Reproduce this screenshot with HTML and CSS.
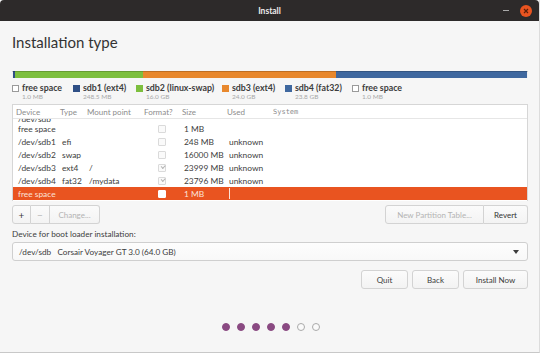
FILE: index.html
```html
<!DOCTYPE html>
<html lang="en">
<head>
    <meta charset="UTF-8">
    <title>Install</title>
    <link rel="stylesheet" href="styles.css">
</head>
<body>
<div class="window">
    <header class="titlebar">
        <span></span>
        <span class="title">Install</span>
        <div class="controls">
            <span class="minimize"></span>
            <span class="close">
                <svg width="12" height="12" viewBox="0 0 12 12"><circle cx="6" cy="6" r="6" fill="#e95420"/><path d="M4 4 L8 8 M8 4 L4 8" stroke="#5a1f0a" stroke-width="1.2"/></svg>
            </span>
        </div>
    </header>

    <main class="content">
        <h1>Installation type</h1>

        <div class="partbar">
            <span class="seg seg-free"></span>
            <span class="seg seg-sdb1"></span>
            <span class="seg seg-sdb2"></span>
            <span class="seg seg-sdb3"></span>
            <span class="seg seg-sdb4"></span>
            <span class="seg seg-free"></span>
        </div>

        <ul class="legend">
            <li><span class="swatch swatch-free"></span><div><b>free space</b><small>1.0 MB</small></div></li>
            <li><span class="swatch swatch-sdb1"></span><div><b>sdb1 (ext4)</b><small>248.5 MB</small></div></li>
            <li><span class="swatch swatch-sdb2"></span><div><b>sdb2 (linux-swap)</b><small>16.0 GB</small></div></li>
            <li><span class="swatch swatch-sdb3"></span><div><b>sdb3 (ext4)</b><small>24.0 GB</small></div></li>
            <li><span class="swatch swatch-sdb4"></span><div><b>sdb4 (fat32)</b><small>23.8 GB</small></div></li>
            <li><span class="swatch swatch-free"></span><div><b>free space</b><small>1.0 MB</small></div></li>
        </ul>

        <div class="parts">
            <div class="row head">
                <span>Device</span><span>Type</span><span>Mount point</span><span>Format?</span><span>Size</span><span>Used</span><span class="sys">System</span>
            </div>
            <div class="rows">
                <div class="row clipped"><span>/dev/sdb</span></div>
                <div class="row"><span>free space</span><span></span><span></span><span><i class="check"></i></span><span>1 MB</span><span></span><span></span></div>
                <div class="row"><span>/dev/sdb1</span><span>efi</span><span></span><span><i class="check"></i></span><span>248 MB</span><span>unknown</span><span></span></div>
                <div class="row"><span>/dev/sdb2</span><span>swap</span><span></span><span><i class="check"></i></span><span>16000 MB</span><span>unknown</span><span></span></div>
                <div class="row"><span>/dev/sdb3</span><span>ext4</span><span>/</span><span><i class="check on"></i></span><span>23999 MB</span><span>unknown</span><span></span></div>
                <div class="row"><span>/dev/sdb4</span><span>fat32</span><span>/mydata</span><span><i class="check on"></i></span><span>23796 MB</span><span>unknown</span><span></span></div>
                <div class="row selected"><span>free space</span><span></span><span></span><span><i class="check"></i></span><span>1 MB</span><span class="cursor"></span><span></span></div>
            </div>
        </div>

        <div class="toolbar">
            <div class="btn-group">
                <button class="btn small">+</button>
                <button class="btn small" disabled>−</button>
                <button class="btn change" disabled>Change...</button>
            </div>
            <div class="btn-group">
                <button class="btn newtable" disabled>New Partition Table...</button>
                <button class="btn revert">Revert</button>
            </div>
        </div>

        <label class="boot-label">Device for boot loader installation:</label>
        <div class="combo">
            <span>/dev/sdb&nbsp;&nbsp;&nbsp;Corsair Voyager GT 3.0 (64.0 GB)</span>
            <span class="arrow"></span>
        </div>

        <div class="actions">
            <button class="btn action">Quit</button>
            <button class="btn action">Back</button>
            <button class="btn action install">Install Now</button>
        </div>

        <div class="dots">
            <span class="dot done"></span>
            <span class="dot done"></span>
            <span class="dot done"></span>
            <span class="dot done"></span>
            <span class="dot done"></span>
            <span class="dot"></span>
            <span class="dot"></span>
        </div>
    </main>
</div>
</body>
</html>
```

FILE: styles.css
```css
*, *::before, *::after {
    box-sizing: border-box;
    margin: 0;
    padding: 0;
}

html, body {
    width: 540px;
    height: 354px;
    overflow: hidden;
    font-family: Lato, "Noto Sans", sans-serif;
    color: #3c3c3c;
    background: #ffffff;
}

.window {
    height: 353px;
    background: #f6f6f6;
    border-bottom: 1px solid #c8c8c8;
    border-right: 1px solid #dcdcdc;
    display: flex;
    flex-direction: column;
}

/* title bar */
.titlebar {
    height: 21px;
    background: #2d2a2a;
    display: grid;
    grid-template-columns: 1fr auto 1fr;
    align-items: center;
    border-radius: 4px 4px 0 0;
}

.title {
    color: #ececec;
    font-weight: 700;
    font-size: 8.5px;
}

.controls {
    display: flex;
    justify-content: flex-end;
    align-items: center;
    gap: 11px;
    padding-right: 7px;
}

.minimize {
    width: 6px;
    height: 1.5px;
    background: #aaa;
}

.close svg {
    display: block;
}

/* content */
.content {
    flex: 1;
    padding: 0 11px 0 12px;
    display: flex;
    flex-direction: column;
}

h1 {
    font-weight: 400;
    font-size: 15px;
    line-height: 20px;
    margin-top: 11px;
    color: #333;
}

.partbar {
    display: flex;
    height: 7px;
    margin-top: 19px;
    background: #3f689f;
}

.seg { display: block; height: 100%; box-shadow: inset 0 1px 0 rgba(0,0,0,0.18); }
.seg-free { width: 1px; background: #f0f0f0; }
.seg-sdb1 { width: 2px; background: #2f4f86; }
.seg-sdb2 { flex: 16.0; background: #7dbf3e; }
.seg-sdb3 { flex: 24.0; background: #e8882d; }
.seg-sdb4 { flex: 23.8; background: #3f689f; }

.legend {
    list-style: none;
    display: grid;
    grid-template-columns: 61px 63px 86px 63px 67px auto;
    margin-top: 5px;
    height: 17px;
}

.legend li {
    display: flex;
    gap: 3px;
    align-items: flex-start;
    white-space: nowrap;
}

.legend b {
    display: block;
    font-weight: 700;
    font-size: 8.8px;
    line-height: 10px;
    color: #3c3c3c;
}

.legend small {
    display: block;
    font-size: 6.5px;
    line-height: 7px;
    color: #a8a8a8;
}

.swatch {
    width: 7px;
    height: 7px;
    margin-top: 2px;
    flex: none;
}
.swatch-free { border: 1px solid #9a9a9a; background: #fff; }
.swatch-sdb1 { background: #2f4f86; }
.swatch-sdb2 { background: #7dbf3e; }
.swatch-sdb3 { background: #e8882d; }
.swatch-sdb4 { background: #3f689f; }

/* partitions table */
.parts {
    margin-top: 4px;
    height: 97px;
    background: #fff;
    border: 1px solid #d6d6d6;
    border-bottom: none;
    display: flex;
    flex-direction: column;
    font-size: 8.4px;
}

.row {
    display: grid;
    grid-template-columns: 44px 27px 57px 38px 45px 46px 1fr;
    align-items: center;
    height: 13px;
    padding-left: 5px;
    white-space: nowrap;
}

.row.head {
    height: 14px;
    color: #8c8c8c;
    padding-left: 3px;
    border-bottom: 1px solid #e6e6e6;
    flex: none;
    font-size: 8px;
}

.head .sys {
    font-family: "DejaVu Sans Mono", monospace;
    font-size: 7px;
}

.row.clipped {
    height: 3px;
    overflow: hidden;
    line-height: 6px;
    align-items: start;
}

.row.clipped span { display: block; height: 6px; margin-top: -3px; }

.check {
    display: block;
    width: 8px;
    height: 8px;
    margin-left: 12px;
    border: 1px solid #dadada;
    border-radius: 1px;
    background: #fafafa;
    position: relative;
}

.check.on::after {
    content: "";
    position: absolute;
    left: 1.5px;
    top: 0.5px;
    width: 4px;
    height: 2.5px;
    border-left: 1px solid #b5b5b5;
    border-bottom: 1px solid #b5b5b5;
    transform: rotate(-45deg);
}

.row.selected {
    background: #e95420;
    color: #fbe3d8;
}

.selected .check {
    background: #fff;
    border-color: #fff;
}

.cursor {
    display: block;
    width: 1px;
    height: 11px;
    background: #fbe3d8;
}

/* buttons */
.btn {
    font-family: inherit;
    font-size: 8px;
    color: #3c3c3c;
    background: linear-gradient(#fbfbfb, #f3f3f3);
    border: 1px solid #d3d3d3;
    border-radius: 3px;
    height: 19px;
    cursor: pointer;
}

.btn:disabled {
    color: #b4b4b4;
}

.toolbar {
    display: flex;
    justify-content: space-between;
    margin-top: 4px;
}

.btn-group {
    display: flex;
}

.btn-group .btn { border-radius: 0; }
.btn-group .btn:first-child { border-radius: 3px 0 0 3px; }
.btn-group .btn:last-child { border-radius: 0 3px 3px 0; }
.btn-group .btn + .btn { border-left: none; }

.btn.small { width: 19px; font-size: 10px; }
.btn.change { width: 50px; }
.btn.newtable { width: 99px; }
.btn.revert { width: 44px; color: #333; }

.boot-label {
    font-size: 8.2px;
    line-height: 10px;
    margin-top: 5px;
    color: #3c3c3c;
}

.combo {
    margin-top: 3px;
    height: 19px;
    border: 1px solid #cfcfcf;
    border-radius: 3px;
    background: linear-gradient(#fdfdfd, #f8f8f8);
    display: flex;
    align-items: center;
    justify-content: space-between;
    padding: 0 8px 0 6px;
    font-size: 8.2px;
}

.arrow {
    width: 0;
    height: 0;
    border-left: 3.5px solid transparent;
    border-right: 3.5px solid transparent;
    border-top: 4px solid #3c3c3c;
}

.actions {
    display: flex;
    justify-content: flex-end;
    gap: 4px;
    margin-top: 9px;
}

.btn.action { width: 47px; }
.btn.install { width: 65px; }

.dots {
    display: flex;
    justify-content: center;
    gap: 7px;
    margin-top: 34px;
    padding-left: 2px;
}

.dot {
    width: 8px;
    height: 8px;
    border-radius: 50%;
    border: 1px solid #aaa;
    background: #fafafa;
}

.dot.done {
    background: #8a4a82;
    border-color: #8a4a82;
}
```
